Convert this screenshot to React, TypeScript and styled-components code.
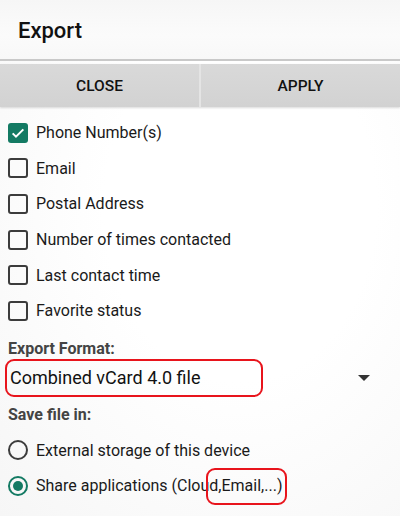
import React, { useState } from "react";
import styled, { createGlobalStyle } from "styled-components";

const GlobalStyle = createGlobalStyle`
  html, body {
    margin: 0;
    padding: 0;
    background: #fdfdfd;
    font-family: Roboto, "Liberation Sans", sans-serif;
    color: #1a1a1a;
  }
`;

const Screen = styled.div`
  width: 400px;
  height: 516px;
  overflow: hidden;
  background: radial-gradient(ellipse at 60% 40%, #ffffff 40%, #f6f6f6 100%);
`;

const Header = styled.div`
  height: 61px;
  display: flex;
  align-items: center;
  padding: 0 18px;
  box-sizing: border-box;
  background: linear-gradient(180deg, #f6f6f6 0%, #fbfbfb 60%, #f8f8f8 100%);
  border-bottom: 2px solid #c9c9c9;
`;

const Title = styled.h1`
  margin: 2px 0 0;
  font-size: 22px;
  font-weight: 500;
  color: #111;
`;

const ButtonBar = styled.div`
  margin-top: 3px;
  height: 43px;
  display: flex;
  background: #d3d3d3;
  box-shadow: 0 1px 2px rgba(0, 0, 0, 0.15);
`;

const BarButton = styled.button`
  flex: 1;
  border: none;
  background: linear-gradient(180deg, #d9d9d9 0%, #d2d2d2 100%);
  font-family: Roboto, "Liberation Sans", sans-serif;
  font-size: 15.5px;
  font-weight: 500;
  color: #111;
  padding: 0;
  & + & {
    border-left: 2px solid #e4e4e4;
  }
`;

const Body = styled.div`
  padding: 15px 8px 0;
`;

const OptionRow = styled.label`
  display: flex;
  align-items: center;
  gap: 8px;
  height: 35.6px;
  font-size: 16px;
  color: #1a1a1a;
  cursor: pointer;
  &:first-child {
    margin-top: -7px;
  }
`;

const Box = styled.span<{ $checked: boolean }>`
  width: 20px;
  height: 20px;
  box-sizing: border-box;
  border-radius: 3px;
  border: ${(p) => (p.$checked ? "none" : "2px solid #3c3c3c")};
  background: ${(p) => (p.$checked ? "#137a63" : "transparent")};
  display: flex;
  align-items: center;
  justify-content: center;
  flex-shrink: 0;
`;

const Radio = styled.span<{ $checked: boolean }>`
  width: 20px;
  height: 20px;
  box-sizing: border-box;
  border-radius: 50%;
  border: 2px solid ${(p) => (p.$checked ? "#137a63" : "#3c3c3c")};
  display: flex;
  align-items: center;
  justify-content: center;
  flex-shrink: 0;
  &::after {
    content: "";
    width: 10px;
    height: 10px;
    border-radius: 50%;
    background: #137a63;
    display: ${(p) => (p.$checked ? "block" : "none")};
  }
`;

const SectionLabel = styled.div<{ $gap?: number }>`
  font-size: 16px;
  font-weight: 700;
  color: #444;
  margin-top: ${(p) => p.$gap ?? 10}px;
  height: 20px;
  line-height: 20px;
`;

const Spinner = styled.div`
  position: relative;
  display: flex;
  align-items: center;
  justify-content: space-between;
  height: 38px;
  margin: 0 0 0 -3px;
  padding: 0 22px 0 5px;
  font-size: 18px;
  color: #111;
`;

const Arrow = styled.span`
  width: 0;
  height: 0;
  border-left: 6px solid transparent;
  border-right: 6px solid transparent;
  border-top: 6px solid #333;
`;

const Mark = styled.span<{ $left: number; $width: number }>`
  position: absolute;
  top: 0;
  left: ${(p) => p.$left}px;
  width: ${(p) => p.$width}px;
  height: 100%;
  box-sizing: border-box;
  border: 2px solid #e8141c;
  border-radius: 9px;
  pointer-events: none;
`;

const RadioList = styled.div`
  margin-top: 8px;
`;

const RadioRow = styled(OptionRow)`
  position: relative;
  &:first-child {
    margin-top: 0;
  }
`;

const Check = () => (
  <svg width="16" height="16" viewBox="0 0 24 24">
    <path d="M4 12.5l5 5L20 6.5" fill="none" stroke="#fff" strokeWidth="3" />
  </svg>
);

const fields = [
  "Phone Number(s)",
  "Email",
  "Postal Address",
  "Number of times contacted",
  "Last contact time",
  "Favorite status",
];

export default function App() {
  const [checked, setChecked] = useState<Record<string, boolean>>({
    "Phone Number(s)": true,
  });
  const [target, setTarget] = useState("share");

  return (
    <Screen>
      <GlobalStyle />
      <Header>
        <Title>Export</Title>
      </Header>
      <ButtonBar>
        <BarButton>CLOSE</BarButton>
        <BarButton>APPLY</BarButton>
      </ButtonBar>
      <Body>
        <div>
          {fields.map((f) => (
            <OptionRow
              key={f}
              onClick={() => setChecked((c) => ({ ...c, [f]: !c[f] }))}
            >
              <Box $checked={!!checked[f]}>{checked[f] && <Check />}</Box>
              {f}
            </OptionRow>
          ))}
        </div>
        <SectionLabel>Export Format:</SectionLabel>
        <Spinner>
          Combined vCard 4.0 file
          <Arrow />
          <Mark $left={0} $width={258} />
        </Spinner>
        <SectionLabel $gap={8}>Save file in:</SectionLabel>
        <RadioList>
          <RadioRow onClick={() => setTarget("external")}>
            <Radio $checked={target === "external"} />
            External storage of this device
          </RadioRow>
          <RadioRow onClick={() => setTarget("share")}>
            <Radio $checked={target === "share"} />
            Share applications (Cloud,Email,...)
            <Mark $left={198} $width={81} style={{ top: 0, height: 37 }} />
          </RadioRow>
        </RadioList>
      </Body>
    </Screen>
  );
}
